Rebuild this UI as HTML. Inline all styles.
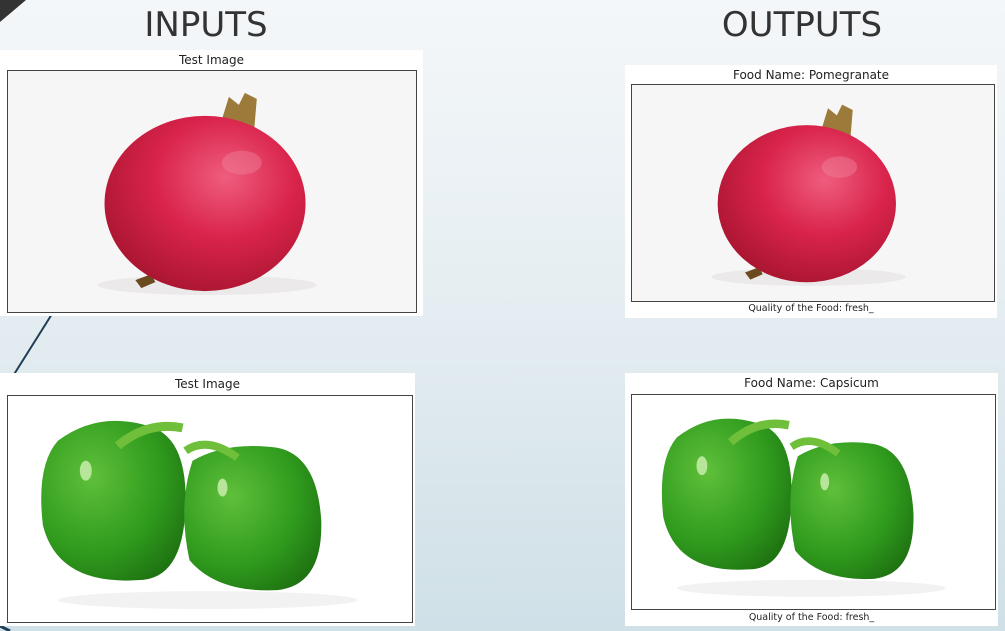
<!DOCTYPE html>
<html><head><meta charset="utf-8"><style>
html,body{margin:0;padding:0}
body{width:1005px;height:631px;overflow:hidden;position:relative;font-family:"DejaVu Sans","Liberation Sans",sans-serif;background:linear-gradient(180deg,#f4f7f9 0%,#e6eef2 45%,#cfe0e7 100%)}
.h{position:absolute;top:5px;font-size:34px;color:#333;font-family:"DejaVu Sans",sans-serif;transform:translateX(-50%)}
.p{position:absolute;background:#fff}
.t{position:absolute;left:0;right:0;text-align:center;font-size:12px;color:#222}
.c{position:absolute;left:0;right:0;text-align:center;font-size:9.5px;color:#222}
.f{position:absolute;border:1px solid #444;box-sizing:border-box;overflow:hidden;background:#fafafa}
svg{display:block;width:100%;height:100%}
</style></head><body>
<svg style="position:absolute;left:0;top:0;width:1005px;height:631px" viewBox="0 0 1005 631">
<polygon points="0,0 26,0 0,22" fill="#333"/>
<line x1="52" y1="314" x2="13" y2="376" stroke="#1f3d55" stroke-width="2"/>
<line x1="0" y1="626" x2="10" y2="631" stroke="#1f3d55" stroke-width="3"/>
</svg>
<div class="h" style="left:206px">INPUTS</div>
<div class="h" style="left:802px">OUTPUTS</div>

<svg width="0" height="0" style="position:absolute">
<defs>
<radialGradient id="pg" cx="0.6" cy="0.35" r="0.7"><stop offset="0" stop-color="#ef5d7e"/><stop offset="0.5" stop-color="#d9234b"/><stop offset="1" stop-color="#a8152f"/></radialGradient>
<radialGradient id="gg" cx="0.35" cy="0.35" r="0.8"><stop offset="0" stop-color="#5fc03a"/><stop offset="0.6" stop-color="#2f9a1d"/><stop offset="1" stop-color="#1d6e10"/></radialGradient>
<g id="pom">
<rect width="410" height="242" fill="#f7f6f6"/>
<ellipse cx="200" cy="215" rx="110" ry="10" fill="#ebe9e9"/>
<path d="M128 210 l16 -6 l4 8 l-14 6z" fill="#6b4a20"/>
<path d="M212 58 l10 -32 l10 8 l6 -12 l12 6 l-4 48z" fill="#9c7a3a"/>
<ellipse cx="198" cy="133" rx="101" ry="88" fill="url(#pg)"/>
<ellipse cx="235" cy="92" rx="20" ry="12" fill="#f08aa0" opacity="0.4"/>
</g>
<g id="pep">
<rect width="405" height="227" fill="#fff"/>
<ellipse cx="200" cy="205" rx="150" ry="9" fill="#f2f2f2"/>
<path d="M50 45 Q90 15 140 30 Q180 40 178 110 Q176 185 130 185 Q50 190 35 130 Q28 70 50 45z" fill="url(#gg)"/>
<path d="M185 65 Q220 45 270 52 Q310 60 314 125 Q316 190 270 195 Q210 198 182 165 Q170 110 185 65z" fill="url(#gg)"/>
<path d="M110 50 Q140 25 175 32" stroke="#6fbf3a" stroke-width="9" fill="none"/>
<path d="M178 55 Q200 40 230 62" stroke="#6fbf3a" stroke-width="8" fill="none"/>
<ellipse cx="78" cy="75" rx="6" ry="10" fill="#b7e59a"/>
<ellipse cx="215" cy="92" rx="5" ry="9" fill="#b7e59a"/>
</g>
</defs></svg>

<div class="p" style="left:0;top:50px;width:423px;height:266px">
<div class="t" style="top:3px">Test Image</div>
<div class="f" style="left:7px;top:20px;width:410px;height:243px"><svg viewBox="0 0 410 242" preserveAspectRatio="none"><use href="#pom"/></svg></div>
</div>
<div class="p" style="left:0;top:373px;width:415px;height:253px">
<div class="t" style="top:4px">Test Image</div>
<div class="f" style="left:7px;top:22px;width:406px;height:228px"><svg viewBox="0 0 405 227" preserveAspectRatio="none"><use href="#pep"/></svg></div>
</div>
<div class="p" style="left:625px;top:65px;width:372px;height:253px">
<div class="t" style="top:3px">Food Name: Pomegranate</div>
<div class="f" style="left:6px;top:19px;width:364px;height:218px"><svg viewBox="0 0 410 242" preserveAspectRatio="none"><use href="#pom"/></svg></div>
<div class="c" style="top:238px">Quality of the Food: fresh_</div>
</div>
<div class="p" style="left:625px;top:373px;width:373px;height:253px">
<div class="t" style="top:3px">Food Name: Capsicum</div>
<div class="f" style="left:6px;top:21px;width:365px;height:216px"><svg viewBox="0 0 405 227" preserveAspectRatio="none"><use href="#pep"/></svg></div>
<div class="c" style="top:239px">Quality of the Food: fresh_</div>
</div>
</body></html>
